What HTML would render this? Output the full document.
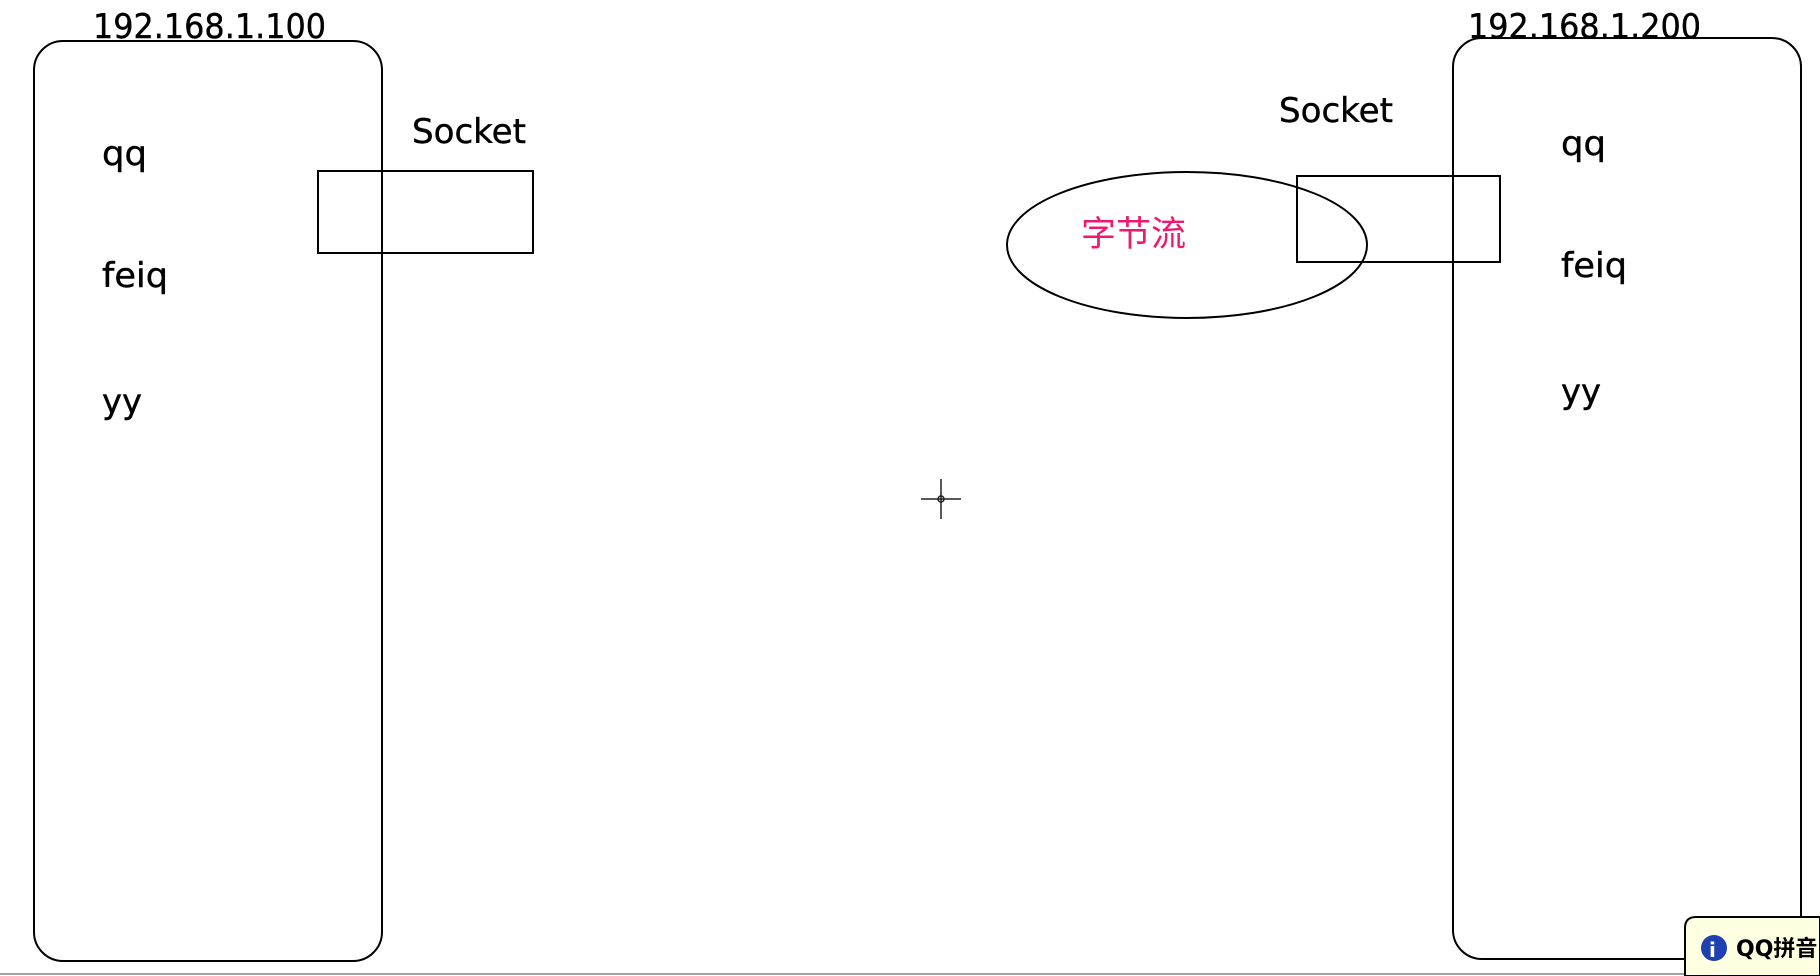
<!DOCTYPE html>
<html><head><meta charset="utf-8"><style>
html,body{margin:0;padding:0;width:1820px;height:976px;overflow:hidden;background:#fff}
svg{display:block}
text{font-family:"DejaVu Sans","Noto Sans CJK SC",sans-serif;fill:#000}
</style></head><body>
<svg width="1820" height="976" viewBox="0 0 1820 976" xmlns="http://www.w3.org/2000/svg">
<g fill="none" stroke="#000" stroke-width="2">
<rect x="34" y="41" width="348" height="920" rx="29" ry="29"/>
<rect x="318" y="171" width="215" height="82"/>
<rect x="1453" y="38" width="348" height="921" rx="29" ry="29"/>
<rect x="1297" y="176" width="203" height="86"/>
<ellipse cx="1187" cy="245" rx="180" ry="73"/>
</g>
<g font-size="34" stroke="#000" stroke-width="0.4">
<text x="93" y="38" textLength="233" lengthAdjust="spacingAndGlyphs">192.168.1.100</text>
<text x="1468" y="38" textLength="233" lengthAdjust="spacingAndGlyphs">192.168.1.200</text>
<text x="102" y="165" textLength="45" lengthAdjust="spacingAndGlyphs">qq</text>
<text x="102" y="287" textLength="66" lengthAdjust="spacingAndGlyphs">feiq</text>
<text x="102" y="413" textLength="40" lengthAdjust="spacingAndGlyphs">yy</text>
<text x="412" y="143" textLength="114" lengthAdjust="spacingAndGlyphs">Socket</text>
<text x="1561" y="155" textLength="45" lengthAdjust="spacingAndGlyphs">qq</text>
<text x="1561" y="277" textLength="66" lengthAdjust="spacingAndGlyphs">feiq</text>
<text x="1561" y="403" textLength="40" lengthAdjust="spacingAndGlyphs">yy</text>
<text x="1279" y="122" textLength="114" lengthAdjust="spacingAndGlyphs">Socket</text>
</g>
<text x="1081" y="246" font-size="35" style="fill:#f0186c;font-family:'Noto Sans CJK SC',sans-serif">字节流</text>
<g stroke="#222" stroke-width="1.5" fill="none">
<line x1="921" y1="499" x2="961" y2="499"/>
<line x1="941" y1="479" x2="941" y2="519"/>
<circle cx="941" cy="499" r="3"/>
</g>
<line x1="0" y1="974" x2="1686" y2="974" stroke="#a0a0a0" stroke-width="2"/>
<path d="M1685 976 V928 Q1685 917 1696 917 H1820 V976 Z" fill="#ffffe1" stroke="#000" stroke-width="2"/>
<circle cx="1714" cy="948" r="13" fill="#1e40b0"/>
<text x="1709" y="957" font-size="20" font-weight="bold" style="fill:#fff">i</text>
<text x="1736" y="956" font-size="22" font-weight="bold">QQ拼音</text>
</svg>
</body></html>
